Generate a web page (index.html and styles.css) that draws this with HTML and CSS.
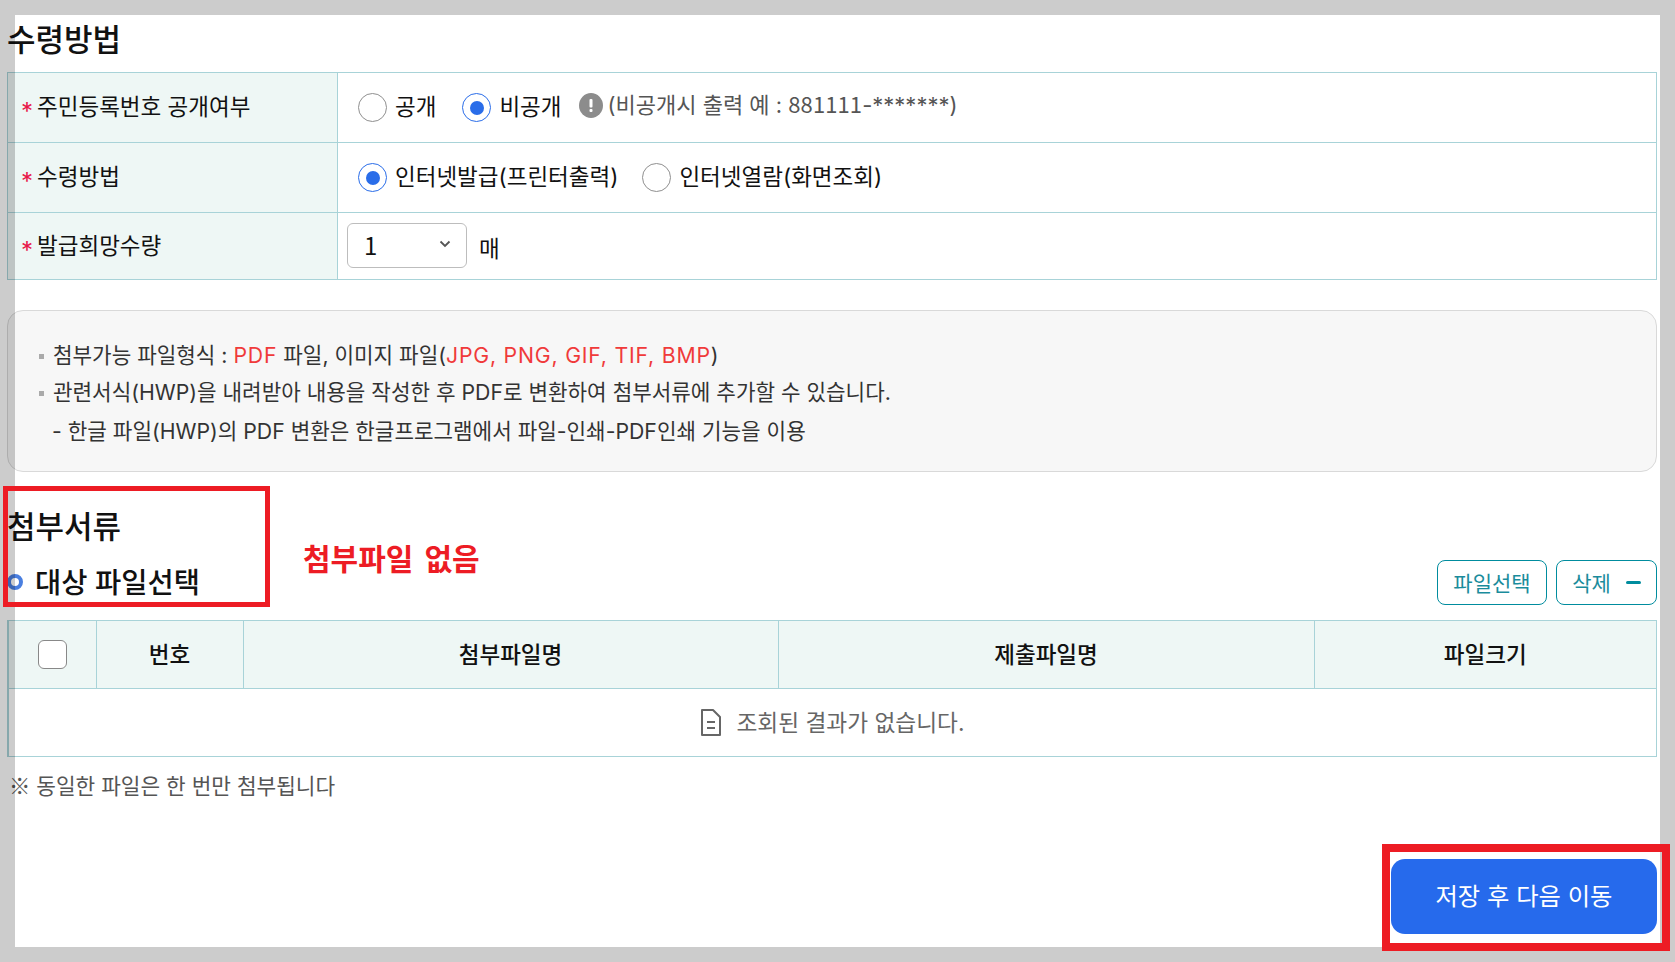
FILE: index.html
```html
<!DOCTYPE html>
<html lang="ko">
<head>
<meta charset="utf-8">
<title>수령방법</title>
<link rel="stylesheet" href="styles.css">
</head>
<body>
<div class="page">
  <h2 class="title title-top">수령방법</h2>
  <table class="form">
    <colgroup><col class="c-label"><col></colgroup>
    <tr class="r70">
      <th><span class="req">*</span>주민등록번호 공개여부</th>
      <td>
        <div class="opts opts-wide">
          <label class="opt"><i class="radio"></i>공개</label>
          <label class="opt"><i class="radio on"></i>비공개</label>
          <span class="hint">
            <svg class="hint-ico" viewBox="0 0 24 25"><ellipse cx="12" cy="12.500" rx="12" ry="12.500" fill="#8c8c8c"/><rect x="10.500" y="6" width="3" height="8.500" rx="1" fill="#fff"/><rect x="10.500" y="16" width="3" height="3" rx="1" fill="#fff"/></svg>
            <span>(비공개시 출력 예 : <span class="num">881111</span>-*******)</span>
          </span>
        </div>
      </td>
    </tr>
    <tr class="r70">
      <th><span class="req">*</span>수령방법</th>
      <td>
        <div class="opts">
          <label class="opt"><i class="radio on"></i>인터넷발급(프린터출력)</label>
          <label class="opt"><i class="radio"></i>인터넷열람(화면조회)</label>
        </div>
      </td>
    </tr>
    <tr class="r67">
      <th><span class="req">*</span>발급희망수량</th>
      <td class="td-select">
        <div class="qty">
          <div class="select"><span class="num">1</span>
            <svg class="chev" viewBox="0 0 12 8"><path d="M1.500 1.500 6 6l4.500-4.500" fill="none" stroke="#555" stroke-width="1.800"/></svg>
          </div>
          <span class="unit">매</span>
        </div>
      </td>
    </tr>
  </table>

  <div class="notice">
    <p class="bul">첨부가능 파일형식 : <em>PDF</em> 파일, 이미지 파일(<em>JPG, PNG, GIF, TIF, BMP</em>)</p>
    <p class="bul">관련서식(HWP)을 내려받아 내용을 작성한 후 PDF로 변환하여 첨부서류에 추가할 수 있습니다.</p>
    <p class="sub-line">- 한글 파일(HWP)의 PDF 변환은 한글프로그램에서 파일-인쇄-PDF인쇄 기능을 이용</p>
  </div>

  <div class="attach-head">
    <div>
      <h2 class="title">첨부서류</h2>
      <h3 class="subtitle"><i class="ring"></i>대상 파일선택</h3>
    </div>
    <div class="btns">
      <button class="btn btn-file">파일선택</button>
      <button class="btn btn-del">삭제<i class="minus"></i></button>
    </div>
  </div>

  <table class="files">
    <colgroup><col class="f1"><col class="f2"><col class="f3"><col class="f4"><col></colgroup>
    <tr class="r68">
      <th><i class="check"></i></th>
      <th>번호</th>
      <th>첨부파일명</th>
      <th>제출파일명</th>
      <th>파일크기</th>
    </tr>
    <tr class="r68">
      <td colspan="5">
        <div class="empty">
          <svg class="doc" viewBox="0 0 22 27"><path d="M2 1h11l7 7v18H2z" fill="none" stroke="#666" stroke-width="2" stroke-linejoin="round"/><path d="M7 13h8M7 19h8" stroke="#666" stroke-width="2"/></svg>
          <span>조회된 결과가 없습니다.</span>
        </div>
      </td>
    </tr>
  </table>

  <p class="note">※ 동일한 파일은 한 번만 첨부됩니다</p>

  <div class="foot"><button class="save">저장 후 다음 이동</button></div>

  <div class="frame"></div>
  <div class="mark mark-head"></div>
  <div class="mark mark-save"></div>
  <div class="mark-text">첨부파일 없음</div>
</div>
</body>
</html>
```
FILE: styles.css
```css
* { box-sizing: border-box; }
html, body { margin: 0; padding: 0; height: 100%; overflow: hidden; background: #fff; }
body { font-family: Inter, "Noto Sans CJK KR", sans-serif; color: #111; }
.page { position: relative; width: 1675px; height: 962px; padding-left: 7px; overflow: hidden; }
.page > * { width: 1650px; }
.num { font-family: "Noto Sans CJK KR", sans-serif; letter-spacing: 0.100px; }

.title { margin: 0; font-size: 31px; line-height: 48px; font-weight: 500; color: #111; }
.title-top { padding-top: 16px; margin-bottom: 8px; }

table { border-collapse: collapse; table-layout: fixed; }
.form th, .form td, .files th, .files td { border: 1px solid #a8d3d8; padding: 0; }
.form th { background: #eef7f5; text-align: left; font-weight: 400; font-size: 22.500px; padding: 0 0 2px 13px; }
.form td { font-size: 22.500px; padding-left: 20px; }
.form td.td-select { padding-left: 9px; }
.c-label { width: 330px; }
.r70 { height: 70px; }
.r67 { height: 67px; }
.r68 { height: 68px; }
.req { color: #e8174a; font-size: 24px; margin-right: 4px; vertical-align: -5px; line-height: 1; }

.opts { display: flex; align-items: center; gap: 24px; }
.opts-wide { gap: 26px; }
.opt { display: flex; align-items: center; gap: 8px; line-height: 1.4; padding-bottom: 2px; }
.radio { display: block; width: 29px; height: 29px; margin-top: 2px; border: 1px solid #8f8f8f; border-radius: 50%; background: #fff; position: relative; flex: none; }
.radio.on { border-color: #2a6de9; }
.radio.on::after { content: ""; position: absolute; left: 6.500px; top: 6.500px; width: 14px; height: 14px; border-radius: 50%; background: #2a6de9; }
.hint { display: flex; align-items: center; gap: 5px; color: #555; font-size: 22px; margin-left: -9px; margin-top: -9px; }
.hint-ico { width: 24px; height: 25px; margin-top: 5px; }

.qty { display: flex; align-items: center; gap: 12px; }
.select { width: 120px; height: 45px; margin-top: -2px; border: 1px solid #bdbdbd; border-radius: 6px; display: flex; align-items: center; justify-content: space-between; padding: 0 15px 2px 16px; background: #fff; }
.select .num { font-size: 24px; }
.chev { width: 12px; height: 8px; }
.unit { padding-top: 2px; }

.notice { margin-top: 30px; height: 162px; background: #f7f7f7; border: 1px solid #d9d9d9; border-radius: 16px; padding: 26px 0 0 31px; font-size: 21.250px; line-height: 37px; color: #333; }
.notice p { margin: 0; }
.notice em { font-style: normal; color: #f03a3a; letter-spacing: 0.800px; }
.bul { position: relative; padding-left: 14px; }
.bul::before { content: ""; position: absolute; left: 0; top: 17px; width: 5px; height: 5px; background: #aaa; }
.sub-line { padding-left: 13px; margin-top: 2px !important; }

.attach-head { display: flex; justify-content: space-between; align-items: flex-end; padding-top: 31px; padding-bottom: 15px; }
.subtitle { margin: 10px 0 0; font-size: 28.500px; line-height: 44px; font-weight: 500; display: flex; align-items: center; gap: 12px; color: #111; }
.ring { display: block; width: 16px; height: 16px; border: 4px solid #4a7fe0; border-radius: 50%; background: #fff; margin-top: -2px; }
.btns { display: flex; gap: 9px; }
.btn { height: 45px; background: #fff; border: 1px solid #008c9e; border-radius: 8px; color: #1a8c9c; font: 400 21px Inter, "Noto Sans CJK KR", sans-serif; display: flex; align-items: center; justify-content: center; padding: 0 0 2px; }
.btn-file { width: 110px; }
.btn-del { width: 101px; gap: 15px; }
.minus { display: block; width: 15px; height: 3px; background: #008c9e; border-radius: 2px; margin-top: 2px; }

.files th { background: #eef7f5; font-size: 22.500px; font-weight: 500; text-align: center; padding-bottom: 3px; }
.files th:first-child, .files td:first-child { border-left: 2px solid #a8d3d8; }
.f1 { width: 88px; }
.f2 { width: 147px; }
.f3 { width: 535px; }
.f4 { width: 536px; }
.check { display: block; width: 29px; height: 29px; margin: 3px 0 0 29px; background: #fff; border: 1px solid #888; border-radius: 6px; }
.empty { display: flex; justify-content: center; align-items: center; gap: 14px; font-size: 22.700px; color: #666; }
.empty span { padding-bottom: 3px; }
.doc { width: 22px; height: 27px; }

.note { margin: 13px 0 0; padding-left: 2px; font-family: "Noto Sans CJK KR", sans-serif; font-size: 21.350px; line-height: 30px; color: #555; }
.foot { display: flex; justify-content: flex-end; margin-top: 59px; }
.save { width: 266px; height: 75px; background: #266aec; color: #fff; border: 0; border-radius: 14px; font: 400 24.300px Inter, "Noto Sans CJK KR", sans-serif; padding: 0 0 5px; }

.page > .frame { position: absolute; left: 0; top: 0; width: 1675px; height: 962px; border-style: solid; border-color: rgba(0,0,0,.2); border-width: 15px; pointer-events: none; }
.page > .mark { position: absolute; border: 5px solid #ed1c24; pointer-events: none; }
.page > .mark-head { left: 3px; top: 486px; width: 267px; height: 121px; }
.page > .mark-save { left: 1382px; top: 844px; width: 288px; height: 107px; border-width: 8px; }
.page > .mark-text { position: absolute; left: 303px; top: 537px; width: auto; font-size: 30px; line-height: 44px; font-weight: 700; color: #ed1c24; word-spacing: 4px; }
```
